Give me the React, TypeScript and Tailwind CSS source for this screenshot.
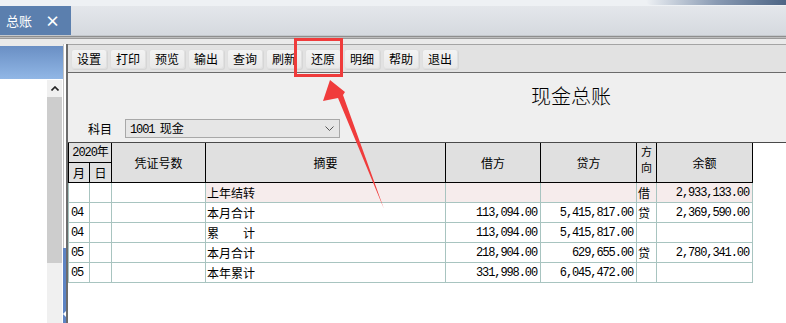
import React from "react";

type Row = { m: string; zy: string; jf: string; df: string; fx: string; ye: string; pink?: boolean };

const rows: Row[] = [
  { m: "", zy: "上年结转", jf: "", df: "", fx: "借", ye: "2,933,133.00", pink: true },
  { m: "04", zy: "本月合计", jf: "113,094.00", df: "5,415,817.00", fx: "贷", ye: "2,369,590.00" },
  { m: "04", zy: "累　　计", jf: "113,094.00", df: "5,415,817.00", fx: "", ye: "" },
  { m: "05", zy: "本月合计", jf: "218,904.00", df: "629,655.00", fx: "贷", ye: "2,780,341.00" },
  { m: "05", zy: "本年累计", jf: "331,998.00", df: "6,045,472.00", fx: "", ye: "" },
];

const tools = ["设置", "打印", "预览", "输出", "查询", "刷新", "还原", "明细", "帮助", "退出"];

const mono = "font-['Liberation_Mono','Noto_Sans_CJK_SC',monospace] tracking-[-1.1px]";
const hd = "flex items-center justify-center border-r border-b border-black bg-[#e0e0e0]";
const bd = "h-[20px] border-r border-b border-[#a8c4c0] flex items-center";

export default function App() {
  return (
    <div className="relative flex h-[323px] w-[786px] flex-col overflow-hidden bg-[#eeeeee] font-['Noto_Sans_CJK_SC',sans-serif] text-[12px] text-black">
      {/* top strip */}
      <div className="flex h-[6px] justify-end bg-[#eef1f4]">
        <div className="h-[5px] w-[140px] rounded-bl-[80px] bg-gradient-to-r from-[#eef1f4] via-[#8a9bb3] to-[#4d6585]" />
      </div>
      {/* tab bar */}
      <div className="flex h-[29px] bg-gradient-to-b from-[#e4e7eb] to-[#d5d9df]">
        <div className="flex w-[71px] items-center gap-[13px] bg-[#5b7fae] pl-[6px] text-[13px] text-white">
          <span>总账</span>
          <span className="text-[15px] font-bold leading-none">×</span>
        </div>
      </div>
      <div className="h-[1px] bg-[#c4c8cc]" />
      <div className="h-[1px] bg-[#8e8e8e]" />
      <div className="h-[1px] bg-[#bdbdbd]" />
      <div className="h-[1px] bg-[#9a9a9a]" />
      <div className="h-[5px] bg-[#eaeaea]" />

      <div className="flex flex-1">
        {/* left panel */}
        <div className="flex w-[63px] flex-col bg-white">
          <div className="h-[2px] bg-[#eaeaea]" />
          <div className="h-[33px] bg-gradient-to-b from-[#6a8fc4] to-[#91b7e6]" />
          <div className="flex flex-1 pt-[1px]">
            <div className="flex-1" />
            <div className="flex w-[15px] flex-col">
              <div className="flex h-[17px] items-center justify-center bg-[#f0f0f0]">
                <svg width="8" height="5" viewBox="0 0 8 5">
                  <polyline points="0.5,4.5 4,1 7.5,4.5" fill="none" stroke="#222" strokeWidth="1.6" />
                </svg>
              </div>
              <div className="h-[166px] bg-[#cdcdcd]" />
              <div className="flex-1 bg-[#f0f0f0]" />
            </div>
            <div className="w-[1px]" />
          </div>
        </div>
        {/* splitter */}
        <div className="flex w-[5px]">
          <div className="flex w-[3px] flex-col">
            <div className="h-[204px] border-l border-[#c2c2c2] bg-white" />
            <div className="flex flex-1 flex-col justify-end bg-[#5d84c4] pb-[6px]">
              <svg width="3" height="6" viewBox="0 0 3 6">
                <polygon points="0,3 3,0 3,6" fill="#fff" />
              </svg>
            </div>
          </div>
          <div className="w-[2px] bg-[#6c6c6c]" />
        </div>
        {/* main panel */}
        <div className="flex flex-1 flex-col border-t border-[#a4a4a4]">
          <div className="flex h-[27px] gap-[3px] bg-[#e2e2e2] pl-[3px] pt-[4px]">
            {tools.map((t) => (
              <div
                key={t}
                className="flex h-[20px] w-[36px] items-center justify-center rounded-[3px] border border-[#e0e0e0] bg-gradient-to-b from-[#f3f3f3] to-[#e9e9e9] shadow-[1px_1px_0_#d6d6d6]"
              >
                {t}
              </div>
            ))}
          </div>
          <div className="h-[1px] bg-[#6b6b6b]" />
          <div className="flex flex-1 flex-col bg-[#efefef]">
            <div className="h-[46px] pl-[463px] pt-[12px] text-[20px] font-light leading-[22px]">现金总账</div>
            <div className="flex h-[19px] items-center">
              <span className="pl-[20px]">科目</span>
              <div className="ml-[13px] flex h-[19px] w-[215px] items-center justify-between border border-[#a8a8a8] bg-[#e6e6e6] pl-[4px] pr-[5px]">
                <span className="whitespace-pre">
                  <span className={mono}>1001</span>  现金
                </span>
                <svg width="9" height="5" viewBox="0 0 9 5">
                  <polyline points="0.5,0.5 4.5,4.5 8.5,0.5" fill="none" stroke="#555" strokeWidth="1" />
                </svg>
              </div>
            </div>
            <div className="mt-[4px] flex-1 border-t border-[#4a4a4a] bg-white">
              <div className="grid w-[685px] grid-cols-[22px_22px_94px_240px_95px_96px_20px_96px]">
                <div className={`${hd} col-span-2 h-[20px] border-l ${mono}`}>2020年</div>
                <div className={`${hd} row-span-2`}>凭证号数</div>
                <div className={`${hd} row-span-2`}>摘要</div>
                <div className={`${hd} row-span-2`}>借方</div>
                <div className={`${hd} row-span-2`}>贷方</div>
                <div className="row-span-2 flex flex-col items-center border-r border-b border-black bg-[#e0e0e0] text-[11px] leading-[16px]">
                  <span>方</span>
                  <span>向</span>
                </div>
                <div className={`${hd} row-span-2`}>余额</div>
                <div className={`${hd} h-[20px] border-l`}>月</div>
                <div className={`${hd} h-[20px]`}>日</div>
                {rows.map((r, i) => {
                  const bg = r.pink ? "bg-[#f6ecec]" : "bg-white";
                  return (
                    <React.Fragment key={i}>
                      <div className={`${bd} border-l pl-[2px] ${mono}`}>{r.m}</div>
                      <div className={bd} />
                      <div className={bd} />
                      <div className={`${bd} ${bg} pl-[1px]`}>{r.zy}</div>
                      <div className={`${bd} ${bg} justify-end pr-[3px] ${mono}`}>{r.jf}</div>
                      <div className={`${bd} ${bg} justify-end pr-[3px] ${mono}`}>{r.df}</div>
                      <div className={`${bd} ${bg} pl-[1px]`}>{r.fx}</div>
                      <div className={`${bd} ${bg} justify-end pr-[3px] ${mono}`}>{r.ye}</div>
                    </React.Fragment>
                  );
                })}
              </div>
            </div>
          </div>
        </div>
      </div>

      {/* annotation overlay */}
      <div className="pointer-events-none absolute left-[294px] top-[38px] h-[39px] w-[49px] border-[3px] border-[#ef3b3b]" />
      <svg className="pointer-events-none absolute left-0 top-0" width="786" height="323" viewBox="0 0 786 323">
        <polygon points="330,80 345,92 343,95 384,209 338,98 323,101" fill="#f03c3c" />
      </svg>
    </div>
  );
}
